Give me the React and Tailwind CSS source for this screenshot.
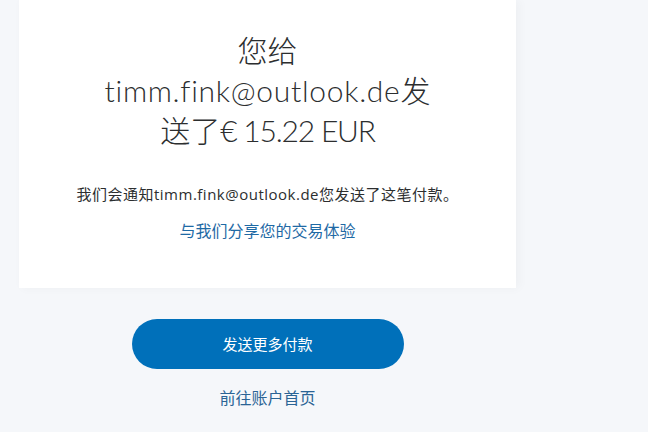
export default function App() {
  const lato = { fontFamily: 'Lato, "Noto Sans CJK SC", sans-serif' };
  const open = { fontFamily: '"Open Sans", "Noto Sans CJK SC", sans-serif' };
  return (
    <div className="w-[648px] h-[432px] bg-[#f5f7fa] overflow-hidden" style={open}>
      <div className="ml-[19px] w-[497px] flex flex-col items-center">
        <div className="w-full bg-white shadow-[3px_0_10px_rgba(0,0,0,0.035)] flex flex-col items-center pt-[30px] pb-[47px]">
          <h1 className="text-[30px] leading-[40px] font-light text-[#2c2e2f] text-center" style={lato}>
            您给
            <br />
            <span className="tracking-[0.7px]">timm.fink@outlook.de</span>发
            <br />
            送了<span className="tracking-[-1.2px]">€ 15.22 EUR</span>
          </h1>
          <p className="mt-[34px] text-[15px] leading-[20px] text-[#2c2e2f] text-center tracking-[0.5px] whitespace-nowrap">
            我们会通知timm.fink@outlook.de您发送了这笔付款。
          </p>
          <a className="mt-[17px] text-[16px] leading-[20px] text-[#1f6aa5] text-center cursor-pointer">
            与我们分享您的交易体验
          </a>
        </div>
        <button className="mt-[31px] w-[272px] h-[50px] rounded-full bg-[#0070ba] text-white text-[15px] leading-[20px]">
          发送更多付款
        </button>
        <a className="mt-[19px] text-[16px] leading-[20px] text-[#2a6495] cursor-pointer">
          前往账户首页
        </a>
      </div>
    </div>
  );
}
